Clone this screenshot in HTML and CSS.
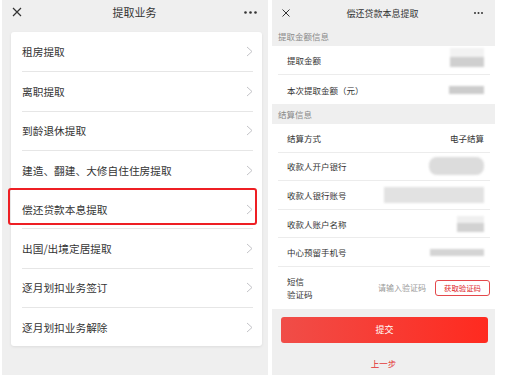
FILE: index.html
```html
<!DOCTYPE html>
<html>
<head>
<meta charset="utf-8">
<link rel="stylesheet" href="styles.css">
</head>
<body>

<div class="screens">

  <!-- 左边：业务列表 -->
  <div class="phone list-phone">
    <div class="topbar">
      <svg class="ico-close" width="10" height="10" viewBox="0 0 10 10"><path d="M1 1L9 9M9 1L1 9" stroke="#333" stroke-width="1.2" fill="none"/></svg>
      <span class="title">提取业务</span>
      <svg class="ico-more" width="13" height="3" viewBox="0 0 13 3"><circle cx="1.5" cy="1.5" r="1.3" fill="#333"/><circle cx="6.5" cy="1.5" r="1.3" fill="#333"/><circle cx="11.5" cy="1.5" r="1.3" fill="#333"/></svg>
    </div>
    <div class="card">
      <div class="item"><span>租房提取</span><svg class="chev" width="7" height="11" viewBox="0 0 7 11"><path d="M1 1L6 5.5L1 10" stroke="#c4c4c8" stroke-width="1" fill="none"/></svg></div>
      <div class="item"><span>离职提取</span><svg class="chev" width="7" height="11" viewBox="0 0 7 11"><path d="M1 1L6 5.5L1 10" stroke="#c4c4c8" stroke-width="1" fill="none"/></svg></div>
      <div class="item"><span>到龄退休提取</span><svg class="chev" width="7" height="11" viewBox="0 0 7 11"><path d="M1 1L6 5.5L1 10" stroke="#c4c4c8" stroke-width="1" fill="none"/></svg></div>
      <div class="item"><span>建造、翻建、大修自住住房提取</span><svg class="chev" width="7" height="11" viewBox="0 0 7 11"><path d="M1 1L6 5.5L1 10" stroke="#c4c4c8" stroke-width="1" fill="none"/></svg></div>
      <div class="item picked"><span>偿还贷款本息提取</span><svg class="chev" width="7" height="11" viewBox="0 0 7 11"><path d="M1 1L6 5.5L1 10" stroke="#c4c4c8" stroke-width="1" fill="none"/></svg></div>
      <div class="item"><span>出国/出境定居提取</span><svg class="chev" width="7" height="11" viewBox="0 0 7 11"><path d="M1 1L6 5.5L1 10" stroke="#c4c4c8" stroke-width="1" fill="none"/></svg></div>
      <div class="item"><span>逐月划扣业务签订</span><svg class="chev" width="7" height="11" viewBox="0 0 7 11"><path d="M1 1L6 5.5L1 10" stroke="#c4c4c8" stroke-width="1" fill="none"/></svg></div>
      <div class="item"><span>逐月划扣业务解除</span><svg class="chev" width="7" height="11" viewBox="0 0 7 11"><path d="M1 1L6 5.5L1 10" stroke="#c4c4c8" stroke-width="1" fill="none"/></svg></div>
    </div>
  </div>

  <!-- 右边：偿还贷款本息提取表单 -->
  <div class="phone form-phone">
    <div class="topbar small">
      <svg class="ico-close" width="8" height="8" viewBox="0 0 8 8"><path d="M0.5 0.5L7.5 7.5M7.5 0.5L0.5 7.5" stroke="#333" stroke-width="1" fill="none"/></svg>
      <span class="title">偿还贷款本息提取</span>
      <svg class="ico-more" width="9" height="2" viewBox="0 0 9 2"><circle cx="1" cy="1" r="1" fill="#333"/><circle cx="4.5" cy="1" r="1" fill="#333"/><circle cx="8" cy="1" r="1" fill="#333"/></svg>
    </div>

    <div class="band">提取金额信息</div>
    <div class="group">
      <div class="row"><span>提取金额</span><span class="mask mask-amount"></span></div>
      <div class="row"><span>本次提取金额（元）</span><span class="mask mask-this"></span></div>
    </div>

    <div class="band">结算信息</div>
    <div class="group tight">
      <div class="row"><span>结算方式</span><span class="val">电子结算</span></div>
      <div class="row"><span>收款人开户银行</span><span class="mask mask-bank"></span></div>
      <div class="row"><span>收款人银行账号</span><span class="mask mask-account"></span></div>
      <div class="row"><span>收款人账户名称</span><span class="mask mask-name"></span></div>
      <div class="row"><span>中心预留手机号</span><span class="mask mask-phone"></span></div>
      <div class="row sms">
        <span class="sms-label">短信<br>验证码</span>
        <span class="sms-input">请输入验证码</span>
        <span class="sms-btn">获取验证码</span>
      </div>
    </div>

    <div class="submit">提交</div>
    <div class="back">上一步</div>
  </div>

</div>

</body>
</html>
```

FILE: styles.css
```css
/* 两个手机截图并排 */
body {
  margin: 0;
  background: #fff;
  font-family: "Noto Sans CJK SC", "Noto Sans", sans-serif;
  color: #333;
}

.screens {
  display: flex;
  gap: 4px;
  padding-left: 2px;
}

.phone {
  height: 375px;
  background: #efefef;
}

/* 顶部标题栏 */
.topbar {
  display: grid;
  grid-template-columns: 1fr auto 1fr;
  align-items: center;
  height: 24px;
  padding: 0 11px 0 10px;
}
.topbar .ico-more {
  justify-self: end;
}
.topbar .title {
  font-size: 11px;
  color: #333;
}
.topbar.small {
  height: 26px;
  padding: 0 12px 0 10px;
}
.topbar.small .title {
  font-size: 9px;
}

/* 左边列表 */
.list-phone {
  width: 266px;
}

.card {
  width: 251px;
  margin: 8px 0 0 9px;
  background: #fff;
  border-radius: 3px;
  box-shadow: 0 1px 3px rgba(0, 0, 0, 0.08);
}

.item {
  display: flex;
  align-items: center;
  justify-content: space-between;
  height: 39.3px;
  margin: 0 9px 0 11px;
  font-size: 10.7px;
  color: #333;
  box-sizing: border-box;
}
.item + .item {
  border-top: 1px solid #e6e6e6;
}

/* 红框标注 */
.item.picked {
  position: relative;
}
.item.picked::after {
  content: "";
  position: absolute;
  left: -14px;
  top: -2px;
  width: 249px;
  height: 37px;
  border: 2px solid #ee1f24;
  border-radius: 3px;
  box-sizing: border-box;
}

/* 右边表单 */
.form-phone {
  width: 223px;
}

.band {
  height: 20px;
  line-height: 20px;
  padding-left: 6px;
  font-size: 8.5px;
  color: #8a8a8a;
}

.group {
  background: #fff;
}

.row {
  display: flex;
  align-items: center;
  justify-content: space-between;
  height: 29px;
  margin: 0 5px 0 6px;
  padding: 0 6px 0 9px;
  font-size: 8.5px;
  color: #333;
  border-bottom: 1px solid #ececec;
  box-sizing: border-box;
}
.group .row:last-child {
  border-bottom: none;
}
.group.tight .row {
  height: 28.6px;
}
.group.tight .row.sms {
  height: 42px;
  padding-right: 0;
}

.val {
  color: #333;
}

/* 打码的部分 */
.mask {
  display: block;
  background: #d0d0d0;
  filter: blur(1.2px);
}
.mask-amount {
  width: 34px;
  height: 19px;
  margin-bottom: 6px;
  background: linear-gradient(#f2f2f2 0 50%, #cfcfcf 50% 100%);
}
.mask-this {
  width: 35px;
  height: 8px;
  background: #cccccc;
}
.mask-bank {
  width: 55px;
  height: 18px;
  border-radius: 8px;
  background: #dcdcdc;
}
.mask-account {
  width: 100px;
  height: 16px;
  background: #e2e2e2;
}
.mask-name {
  width: 27px;
  height: 16px;
  background: linear-gradient(#efefef 0 45%, #d2d2d2 45% 100%);
}
.mask-phone {
  width: 54px;
  height: 7px;
  background: #d4d4d4;
}

/* 短信验证码 */
.sms-label {
  line-height: 13px;
}
.sms-input {
  margin-left: auto;
  margin-right: 9px;
  color: #999;
  font-size: 8px;
}
.sms-btn {
  width: 55px;
  height: 16px;
  line-height: 14px;
  text-align: center;
  border: 1px solid #e4484b;
  border-radius: 3px;
  color: #e0282c;
  font-size: 7.4px;
  box-sizing: border-box;
}

.submit {
  height: 26px;
  line-height: 26px;
  margin: 8px 7px 0 9px;
  border-radius: 3px;
  background: linear-gradient(90deg, #f04d48, #ff2a1f);
  color: #fff;
  text-align: center;
  font-size: 9px;
}

.back {
  margin-top: 12px;
  line-height: 16px;
  text-align: center;
  color: #e22d2d;
  font-size: 8.5px;
}
```
